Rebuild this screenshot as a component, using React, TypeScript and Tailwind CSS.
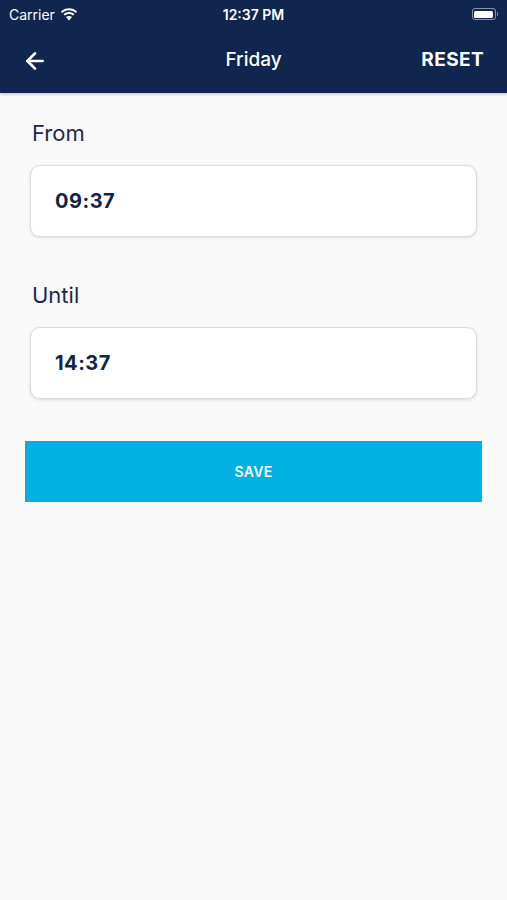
import { ArrowLeft } from "lucide-react";

function Wifi() {
  return (
    <svg width="18" height="13" viewBox="0 0 18 13" fill="white">
      <path d="M9 2.2c2.6 0 5 1 6.8 2.7l1.3-1.4C14.9 1.4 12 .2 9 .2S3.1 1.4.9 3.5l1.3 1.4C4 3.2 6.4 2.2 9 2.2z" />
      <path d="M9 6c1.6 0 3 .6 4.1 1.6l1.3-1.4C13 4.8 11.1 4 9 4s-4 .8-5.4 2.2l1.3 1.4C6 6.6 7.4 6 9 6z" />
      <path d="M9 9.7c.7 0 1.3.3 1.8.7L9 12.4l-1.8-2c.5-.4 1.1-.7 1.8-.7z" />
      <path d="M9 7.9c1.2 0 2.2.4 3 1.1l-1.2 1.4a2.8 2.8 0 0 0-3.6 0L6 9c.8-.7 1.8-1.1 3-1.1z" />
    </svg>
  );
}

function Battery() {
  return (
    <div className="flex items-center">
      <div className="w-[24px] h-[12px] rounded-[3px] border border-white/50 p-[1.5px]">
        <div className="w-full h-full rounded-[1.5px] bg-white" />
      </div>
      <div className="w-[1.5px] h-[4px] rounded-r bg-white/50 ml-[1px]" />
    </div>
  );
}

function TimeField({ label, value }: { label: string; value: string }) {
  return (
    <div className="flex flex-col">
      <div className="text-[22px] leading-[28px] text-[#1c2a4a] pl-[2px]">{label}</div>
      <div className="mt-[18px] h-[72px] rounded-[10px] bg-white border border-[#dcdcdc] shadow-[0_1px_3px_rgba(0,0,0,0.12)] flex items-center pl-[24px]">
        <span className="text-[20px] font-bold text-[#13244a] tracking-[0.5px]">{value}</span>
      </div>
    </div>
  );
}

export default function App() {
  return (
    <div className="w-[507px] h-[900px] bg-[#f9f9f9] flex flex-col font-['Inter',sans-serif]">
      <div className="bg-[#10264f] shadow-[0_1px_3px_rgba(0,0,0,0.25)]">
        <div className="h-[28px] flex items-center justify-between px-[9px] relative">
          <div className="flex items-center gap-[5px] text-white text-[14px]">
            <span>Carrier</span>
            <Wifi />
          </div>
          <span className="absolute left-1/2 -translate-x-1/2 text-white text-[14px] font-semibold">12:37 PM</span>
          <Battery />
        </div>
        <div className="h-[65px] flex items-center justify-between pl-[22px] pr-[23px] relative">
          <ArrowLeft className="w-[26px] h-[26px] text-white" strokeWidth={2.5} />
          <span className="absolute left-1/2 -translate-x-1/2 text-white text-[19px] font-medium">Friday</span>
          <span className="text-white text-[19px] font-bold tracking-[0.4px]">RESET</span>
        </div>
      </div>
      <div className="flex flex-col px-[30px] pt-[26px]">
        <TimeField label="From" value="09:37" />
        <div className="h-[44px]" />
        <TimeField label="Until" value="14:37" />
      </div>
      <div className="px-[25px] mt-[42px]">
        <button className="w-full h-[61px] bg-[#00b1e1] text-white text-[14px] font-semibold tracking-[0.3px]">
          SAVE
        </button>
      </div>
    </div>
  );
}
